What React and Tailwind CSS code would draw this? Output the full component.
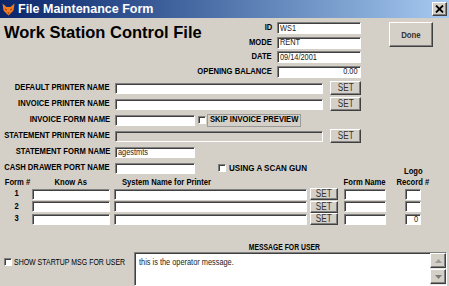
import React from "react";

const SUNK =
  "bg-white border-t border-l border-b border-r border-t-[#808080] border-l-[#808080] border-b-white border-r-white shadow-[inset_1px_1px_0_#404040]";
const RAISED =
  "bg-[#d4d0c8] border-t border-l border-b border-r border-t-white border-l-white border-b-[#404040] border-r-[#404040] shadow-[inset_-1px_-1px_0_#808080]";

function Txt({ children, origin = "origin-left", className = "" }) {
  return (
    <span className={`inline-block whitespace-nowrap leading-none scale-x-[0.82] ${origin} ${className}`}>{children}</span>
  );
}

function Field({ w, h = "h-[11px]", value, right, disabled }) {
  return (
    <div
      className={`${w} ${h} shrink-0 ${SUNK} ${disabled ? "!bg-[#d4d0c8]" : ""} flex items-center overflow-hidden px-[2px] ${
        right ? "justify-end" : ""
      } text-[9px] text-[#222]`}
    >
      {value ? <Txt origin={right ? "origin-right" : "origin-left"}>{value}</Txt> : null}
    </div>
  );
}

function SetBtn({ w = "w-[31px]", h = "h-[14px]" }) {
  return (
    <div className={`${w} ${h} ${RAISED} flex items-center justify-center text-[10px] text-[#333]`}>
      <Txt origin="origin-center">SET</Txt>
    </div>
  );
}

function Check() {
  return <div className={`w-[8px] h-[8px] shrink-0 ${SUNK}`} />;
}

function LabelR({ children, className = "" }) {
  return (
    <div className={`flex justify-end shrink-0 font-bold text-[9.3px] ${className}`}>
      <Txt origin="origin-right">{children}</Txt>
    </div>
  );
}
function LabelC({ children, className = "" }) {
  return (
    <div className={`flex justify-center shrink-0 font-bold ${className}`}>
      <Txt origin="origin-center">{children}</Txt>
    </div>
  );
}
function LabelL({ children, className = "" }) {
  return (
    <div className={`flex justify-start shrink-0 font-bold ${className}`}>
      <Txt origin="origin-left">{children}</Txt>
    </div>
  );
}

function TitleBar() {
  return (
    <div className="h-[18px] shrink-0 flex items-center bg-gradient-to-r from-[#0a246a] to-[#a6caf0]">
      <svg width="13" height="13" viewBox="0 0 13 13" className="ml-[2px]">
        <path d="M0.5 0.5 L4.5 4 L8.5 4 L12.5 0.5 L11.5 7.5 L6.5 12.5 L1.5 7.5 Z" fill="#f07a22" />
        <path d="M3 6 L5 7 M10 6 L8 7" stroke="#9a3a08" strokeWidth="1" />
        <path d="M5.5 9.5 L6.5 11 L7.5 9.5 Z" fill="#7a2a06" />
      </svg>
      <div className="ml-[3px] text-white font-bold text-[12.5px] leading-none">File Maintenance Form</div>
      <div className={`ml-auto mr-[2px] w-[15px] h-[14px] ${RAISED} flex items-center justify-center`}>
        <svg width="9" height="8" viewBox="0 0 9 8">
          <path d="M1 0.5 L8 7.5 M8 0.5 L1 7.5" stroke="#000" strokeWidth="1.8" />
        </svg>
      </div>
    </div>
  );
}

function TopRow({ label, value, right }) {
  return (
    <div className="flex items-center h-[12px]">
      <LabelR className="w-[87px] pr-[5px]">{label}</LabelR>
      <Field w="w-[84px]" h="h-[12px]" value={value} right={right} />
    </div>
  );
}

function MidRow({ label, children }) {
  return (
    <div className="flex items-center h-[16px]">
      <LabelR className="w-[115px] pr-[5px]">{label}</LabelR>
      {children}
    </div>
  );
}

function TableRow({ n, logo }) {
  return (
    <div className="flex items-center h-[12px]">
      <LabelC className="w-[32px] pl-[2px] text-[9.3px]">{n}</LabelC>
      <Field w="w-[78px]" h="h-[11px]" />
      <div className="ml-[4px]">
        <Field w="w-[193px]" h="h-[11px]" />
      </div>
      <div className="ml-[3px]">
        <SetBtn w="w-[28px]" h="h-[12px]" />
      </div>
      <div className="ml-[6px]">
        <Field w="w-[42px]" h="h-[11px]" />
      </div>
      <div className="ml-[19px]">
        <Field w="w-[16px]" h="h-[11px]" value={logo} right />
      </div>
    </div>
  );
}

export default function App() {
  return (
    <div className="w-[449px] h-[286px] overflow-hidden bg-[#d4d0c8] flex flex-col text-black font-['Liberation_Sans',Arial,sans-serif]">
      <TitleBar />

      <div className="flex h-[62px] shrink-0">
        <div className="w-[190px] shrink-0 pl-[4px] pt-[6px] text-[16.5px] font-bold leading-none whitespace-nowrap">
          Work Station Control File
        </div>
        <div className="flex flex-col gap-[2.5px] pt-[4px]">
          <TopRow label="ID" value="WS1" />
          <TopRow label="MODE" value="RENT" />
          <TopRow label="DATE" value="09/14/2001" />
          <TopRow label="OPENING BALANCE" value="0.00" right />
        </div>
        <div
          className={`ml-[28px] mt-[4px] w-[44px] h-[25px] ${RAISED} flex items-center justify-center font-bold text-[9.5px] text-[#333]`}
        >
          <Txt origin="origin-center">Done</Txt>
        </div>
      </div>

      <div className="flex flex-col shrink-0">
        <MidRow label="DEFAULT PRINTER NAME">
          <Field w="w-[208px]" />
          <div className="ml-[7px]">
            <SetBtn />
          </div>
        </MidRow>
        <MidRow label="INVOICE PRINTER NAME">
          <Field w="w-[208px]" />
          <div className="ml-[7px]">
            <SetBtn />
          </div>
        </MidRow>
        <MidRow label="INVOICE FORM NAME">
          <Field w="w-[80px]" />
          <div className="ml-[3px] flex items-center">
            <Check />
            <LabelL className="ml-[1px] w-[94px] h-[13px] items-center pl-[2px] border border-[#9a9a9a] text-[9.3px]">
              SKIP INVOICE PREVIEW
            </LabelL>
          </div>
        </MidRow>
        <MidRow label="STATEMENT PRINTER NAME">
          <Field w="w-[208px]" disabled />
          <div className="ml-[7px]">
            <SetBtn />
          </div>
        </MidRow>
        <MidRow label="STATEMENT FORM NAME">
          <Field w="w-[80px]" value="agestmts" />
        </MidRow>
        <MidRow label="CASH DRAWER PORT NAME">
          <Field w="w-[80px]" />
          <div className="ml-[23px] flex items-center">
            <Check />
            <LabelL className="ml-[3px] text-[9.8px]">USING A SCAN GUN</LabelL>
          </div>
        </MidRow>
      </div>

      <div className="-mt-[8px] flex flex-col shrink-0">
        <div className="flex items-end h-[20px] pb-[1px]">
          <LabelC className="w-[32px] pl-[2px] text-[9.3px]">Form #</LabelC>
          <LabelC className="w-[78px] text-[9.3px]">Know As</LabelC>
          <LabelL className="ml-[4px] w-[193px] pl-[8px] text-[9.3px]">System Name for Printer</LabelL>
          <div className="ml-[3px] w-[28px]" />
          <LabelC className="ml-[6px] w-[42px] text-[9.3px]">Form Name</LabelC>
          <div className="ml-[19px] w-[16px] flex flex-col items-center">
            <LabelC className="mb-[1px] text-[9.3px]">Logo</LabelC>
            <LabelC className="text-[9.3px]">Record #</LabelC>
          </div>
        </div>
        <div className="flex flex-col gap-[0.5px]">
          <TableRow n="1" />
          <TableRow n="2" />
          <TableRow n="3" logo="0" />
        </div>
      </div>

      <div className="mt-[18px] flex shrink-0">
        <div className="w-[134px] shrink-0" />
        <LabelC className="w-[300px] h-[9px] text-[8.3px]">MESSAGE FOR USER</LabelC>
      </div>
      <div className="flex shrink-0">
        <div className="w-[134px] shrink-0 pl-[4px] pt-[6px] flex items-start">
          <Check />
          <div className="ml-[2px] text-[8.5px] leading-[8px]">
            <Txt>SHOW STARTUP MSG FOR USER</Txt>
          </div>
        </div>
        <div className={`w-[313px] h-[34px] ${SUNK} flex`}>
          <div className="flex-1 pl-[4px] pt-[3px] text-[9px] text-[#222]">
            <Txt>this is the operator message.</Txt>
          </div>
          <div className="w-[16px] flex flex-col bg-[#e8e6e2]">
            <div className={`h-[15px] ${RAISED} flex items-center justify-center`}>
              <svg width="7" height="4" viewBox="0 0 7 4">
                <path d="M0 4 L3.5 0 L7 4 Z" fill="#9a9a9a" />
              </svg>
            </div>
            <div className="h-[1px]" />
            <div className={`h-[15px] ${RAISED} flex items-center justify-center`}>
              <svg width="7" height="4" viewBox="0 0 7 4">
                <path d="M0 0 L7 0 L3.5 4 Z" fill="#7a7a7a" />
              </svg>
            </div>
          </div>
        </div>
      </div>
    </div>
  );
}
